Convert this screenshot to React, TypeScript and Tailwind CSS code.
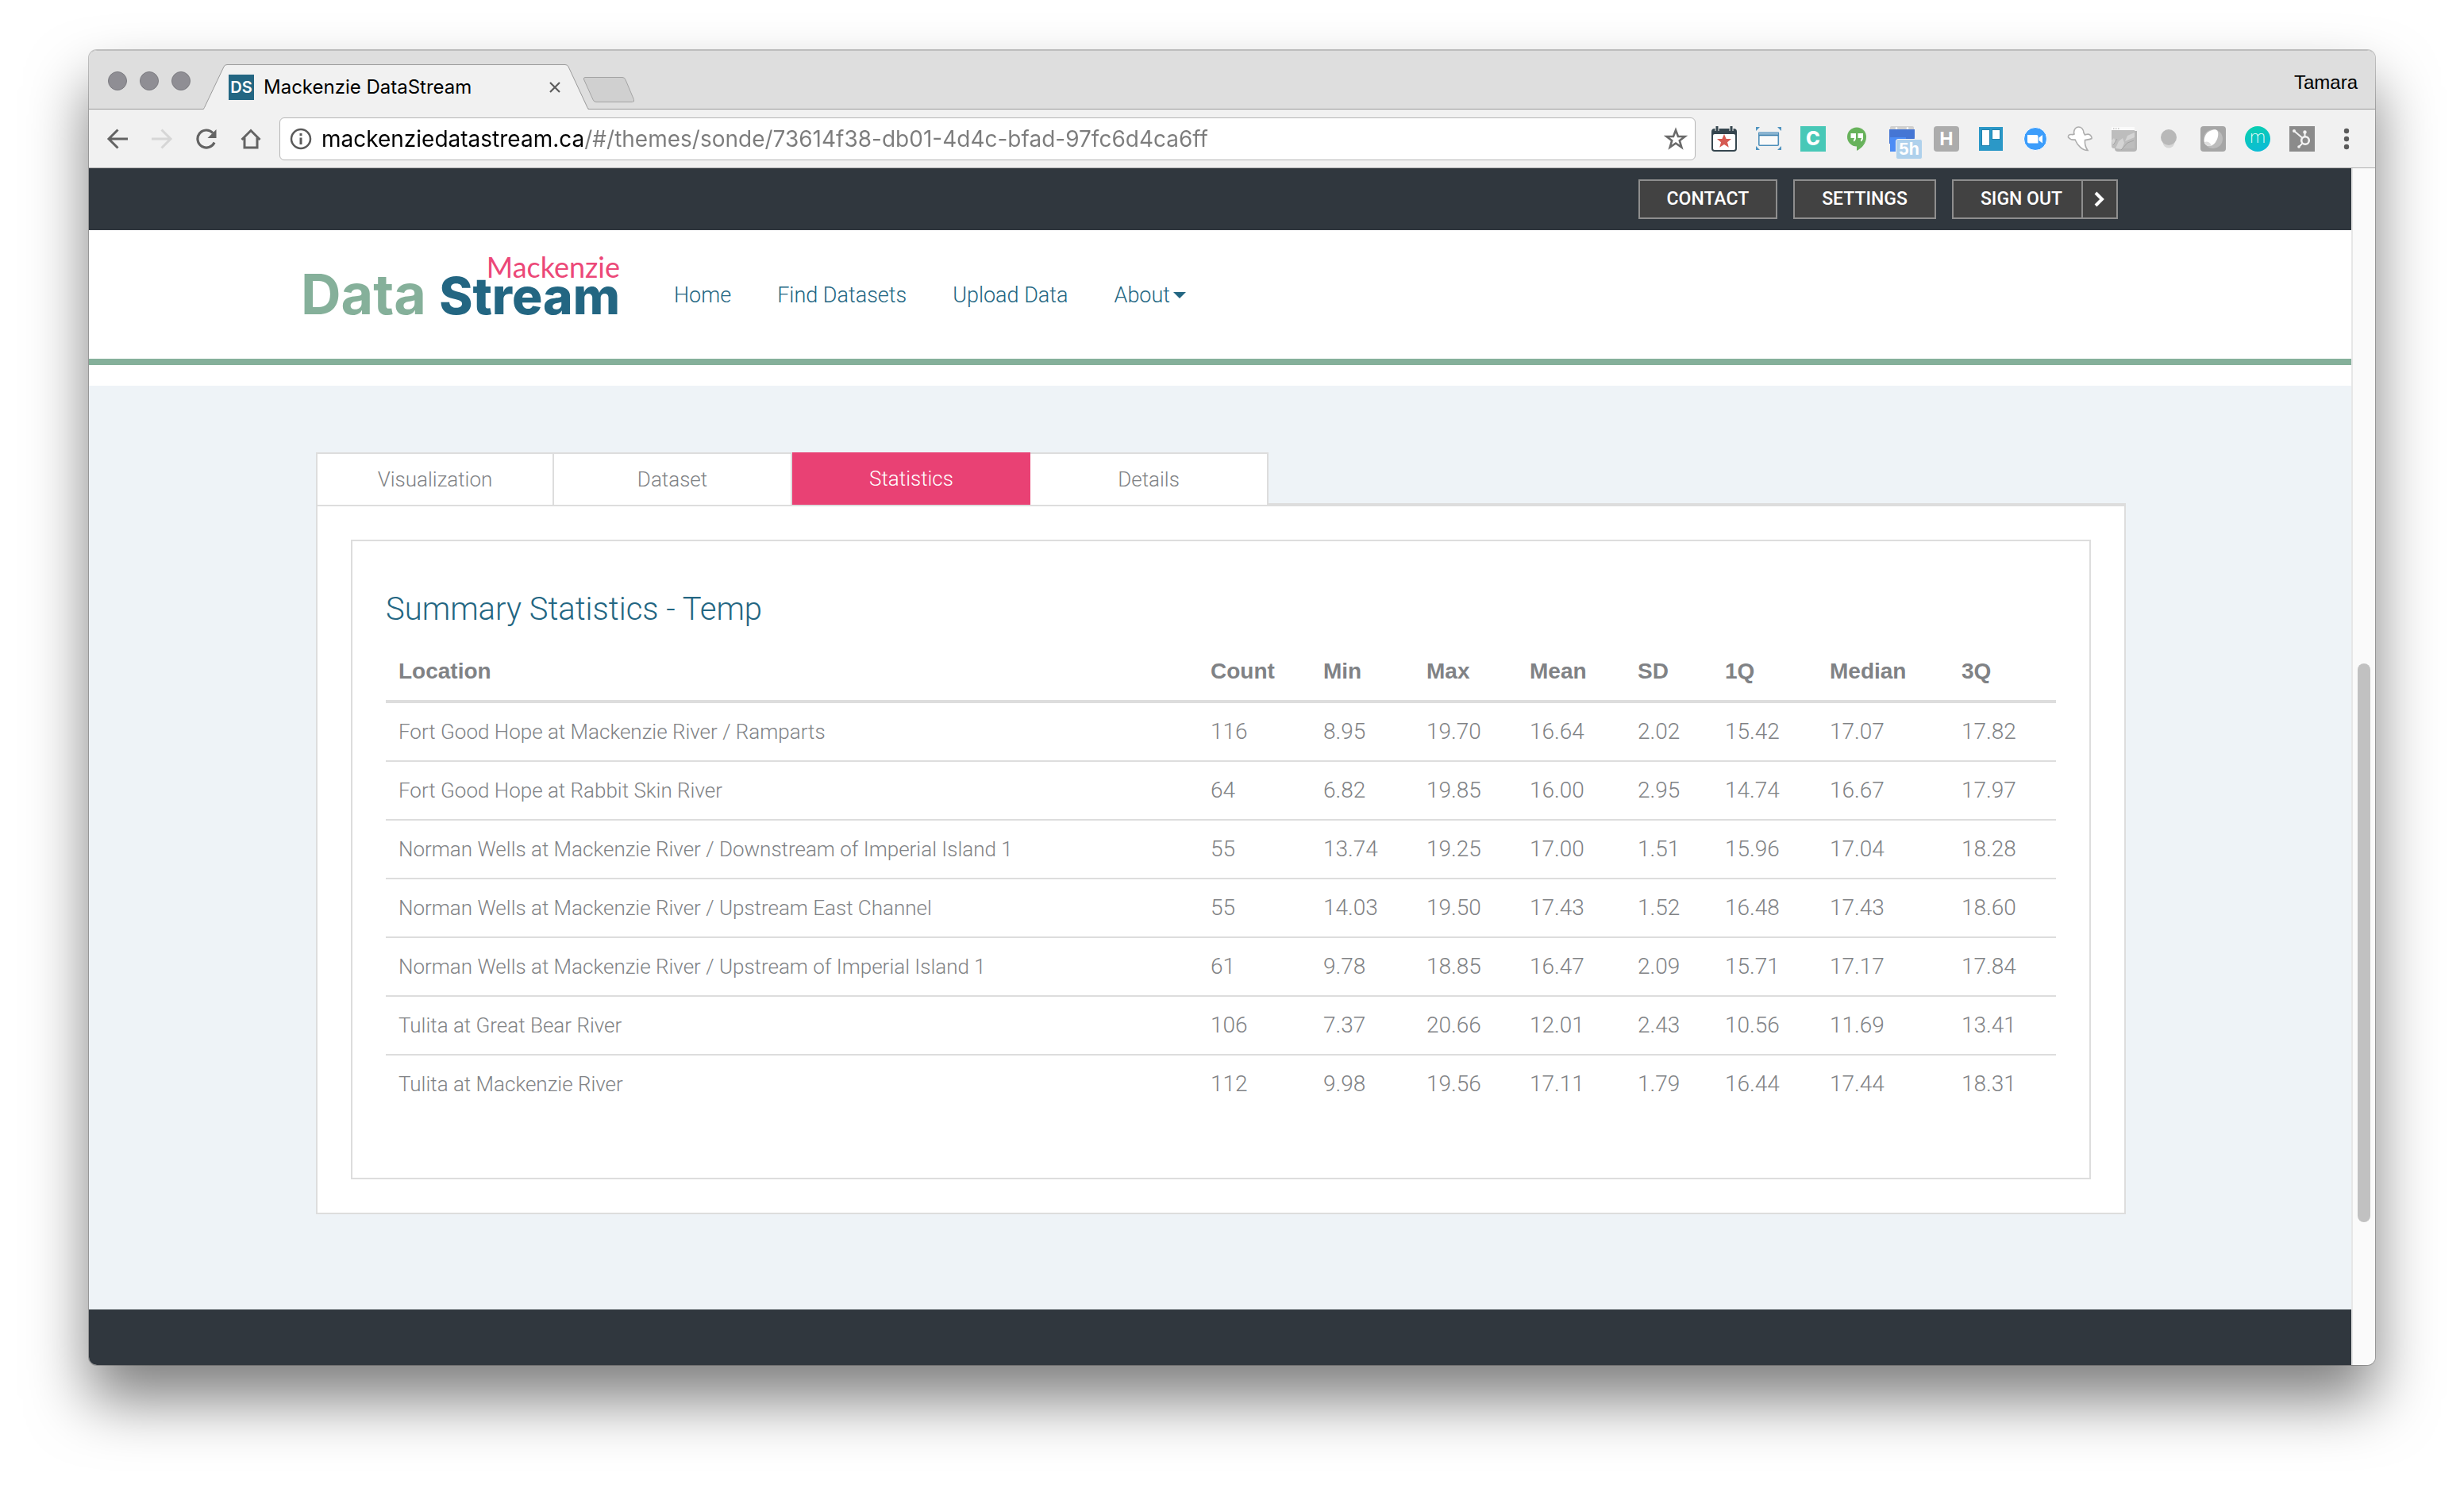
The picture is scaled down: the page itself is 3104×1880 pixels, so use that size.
import { useState, type ReactNode } from 'react';

const rows: [string, ...string[]][] = [
  ['Fort Good Hope at Mackenzie River / Ramparts', '116', '8.95', '19.70', '16.64', '2.02', '15.42', '17.07', '17.82'],
  ['Fort Good Hope at Rabbit Skin River', '64', '6.82', '19.85', '16.00', '2.95', '14.74', '16.67', '17.97'],
  ['Norman Wells at Mackenzie River / Downstream of Imperial Island 1', '55', '13.74', '19.25', '17.00', '1.51', '15.96', '17.04', '18.28'],
  ['Norman Wells at Mackenzie River / Upstream East Channel', '55', '14.03', '19.50', '17.43', '1.52', '16.48', '17.43', '18.60'],
  ['Norman Wells at Mackenzie River / Upstream of Imperial Island 1', '61', '9.78', '18.85', '16.47', '2.09', '15.71', '17.17', '17.84'],
  ['Tulita at Great Bear River', '106', '7.37', '20.66', '12.01', '2.43', '10.56', '11.69', '13.41'],
  ['Tulita at Mackenzie River', '112', '9.98', '19.56', '17.11', '1.79', '16.44', '17.44', '18.31'],
];

const columns: { name: string; width: string }[] = [
  { name: 'Location', width: '' },
  { name: 'Count', width: 'w-[142px]' },
  { name: 'Min', width: 'w-[130px]' },
  { name: 'Max', width: 'w-[130px]' },
  { name: 'Mean', width: 'w-[136px]' },
  { name: 'SD', width: 'w-[110px]' },
  { name: '1Q', width: 'w-[132px]' },
  { name: 'Median', width: 'w-[166px]' },
  { name: '3Q', width: 'w-[135px]' },
];

function ToolButton({ label, children }: { label: string; children: ReactNode }) {
  return (
    <button type="button" aria-label={label} className="relative block size-8 shrink-0">
      {children}
    </button>
  );
}

const icon = 'block size-8 overflow-visible';

function NavigationButtons() {
  return (
    <div className="flex shrink-0 gap-6 pl-5">
      <ToolButton label="Back">
        <svg viewBox="0 0 32 32" className={icon} fill="none" stroke="#636363" strokeWidth="3">
          <path d="M29 16H5M16.500 4.500 5 16l11.500 11.500" />
        </svg>
      </ToolButton>
      <ToolButton label="Forward">
        <svg viewBox="0 0 32 32" className={icon} fill="none" stroke="#d6d6d6" strokeWidth="3">
          <path d="M3 16h24M15.500 4.500 27 16 15.500 27.500" />
        </svg>
      </ToolButton>
      <ToolButton label="Reload">
        <svg viewBox="0 0 32 32" className={icon} fill="none" stroke="#636363" strokeWidth="3.200">
          <path d="M26 20.500A11 11 0 1 1 24 8.500" />
          <path d="M28.500 4v11H17.500z" fill="#636363" stroke="none" />
        </svg>
      </ToolButton>
      <ToolButton label="Home page">
        <svg viewBox="0 0 32 32" className={icon} fill="none" stroke="#636363" strokeWidth="3">
          <path d="M4.500 17 16 5.500 27.500 17M8 14.500V27h16V14.500" />
        </svg>
      </ToolButton>
    </div>
  );
}

function Extensions() {
  return (
    <div className="flex shrink-0 gap-6">
      <ToolButton label="Calendar favourites">
        <svg viewBox="0 0 32 32" className={icon}>
          <rect x="0" y="3" width="32" height="29" rx="4" fill="#36464f" />
          <rect x="2" y="10" width="28" height="20" rx="2" fill="#fff" />
          <path d="M7 0v6M25 0v6" stroke="#f1f1f1" strokeWidth="5" />
          <path d="M7 0v6M25 0v6" stroke="#36464f" strokeWidth="3" />
          <path d="m16 10 2.600 6h6.400l-5 4.200 1.800 6.600L16 23l-5.800 3.800 1.800-6.600-5-4.200h6.400z" fill="#d65a52" />
        </svg>
      </ToolButton>
      <ToolButton label="Window resizer">
        <svg viewBox="0 0 32 32" className={icon}>
          <path d="M0 1h5L0 6zM32 1h-5l5 5zM0 30h5l-5-5zM32 30h-5l5-5z" fill="#4e93bf" />
          <rect x="3.800" y="7.800" width="24.500" height="16.500" rx="1" fill="#fafafa" stroke="#4e8fba" strokeWidth="1.600" />
          <path d="M4 7h24v4H4z" fill="#8bb4d1" />
          <path d="M4 11.500h24" stroke="#3f80ad" strokeWidth="1.500" />
        </svg>
      </ToolButton>
      <ToolButton label="Clip">
        <span className="flex size-8 items-center justify-center bg-[#48c8b7] font-['Inter',sans-serif] text-[24px] leading-8 font-extrabold text-white">C</span>
      </ToolButton>
      <ToolButton label="Hangouts">
        <svg viewBox="0 0 32 32" className={icon}>
          <path d="M15 1a12 12 0 1 1 0 24v6C22 27.500 27 21 27 13.500A12 12 0 0 0 15 1" fill="#67b25b" />
          <circle cx="15" cy="13.500" r="12" fill="#67b25b" />
          <path d="M7.500 9h6.500v6c0 2-1.200 3.500-3 4.500v-2.500c.8-.6 1-1.300 1-2H7.500zM16.500 9H23v6c0 2-1.200 3.500-3 4.500v-2.500c.8-.6 1-1.300 1-2h-4.500z" fill="#fff" />
        </svg>
      </ToolButton>
      <ToolButton label="Calendar, next event in 5 hours">
        <svg viewBox="0 0 32 32" className={icon}>
          <rect x="1" y="0" width="30" height="6" rx="2" fill="#cfcfcf" />
          <circle cx="9" cy="2.500" r="1.300" fill="#fff" />
          <circle cx="23" cy="2.500" r="1.300" fill="#fff" />
          <path d="M0 4h32v10l-1 8H0z" fill="#4576d4" />
          <path d="M1 14h20v18H1z" fill="#4c8df5" />
        </svg>
        <span className="absolute top-4 left-2 box-content h-6 w-8 rounded-[3px] border border-[#f1f1f1] bg-[#afd1ec] text-center text-[22px] leading-6 font-bold text-white">5h</span>
      </ToolButton>
      <ToolButton label="H">
        <span className="flex size-8 items-center justify-center rounded-[4px] bg-[#acacac] text-[24px] leading-8 font-bold text-white">H</span>
      </ToolButton>
      <ToolButton label="Boards">
        <svg viewBox="0 0 32 32" className={icon}>
          <rect x="1" y="1" width="30" height="30" fill="#2b98c7" />
          <rect x="4.500" y="4.500" width="10" height="20" fill="#fff" stroke="#1f82ae" />
          <rect x="17.500" y="4.500" width="10" height="12" fill="#fff" stroke="#1f82ae" />
        </svg>
      </ToolButton>
      <ToolButton label="Video call">
        <svg viewBox="0 0 32 32" className={icon}>
          <circle cx="16" cy="16" r="14.500" fill="#3c9dfb" stroke="#fff" strokeWidth="1" />
          <path d="M6 11h11.500a2 2 0 0 1 2 2v8.500H8a2 2 0 0 1-2-2zM20.500 14.500l4.500-3.500v10.500l-4.500-3.500z" fill="#fff" />
        </svg>
      </ToolButton>
      <ToolButton label="Ghost">
        <svg viewBox="0 0 32 32" className={icon} fill="#fff" stroke="#adadad" strokeWidth="1.600">
          <path d="M8.500 8C9 3.500 11.500 1 14.500 1s6 2.500 6.500 7.500l1.500 2.500c2-.5 3.500-1.500 5.500-.5s3.500 3.500 3 5c-2 1.500-6.500 1.500-8.500 2-.5 5 1 9.500 3.500 13-7 0-13-6.500-16-13.500-3 .5-6.500-.5-8.500-3-.5-2 1-3.500 3-3.500 1.500 0 3 .5 4.500-.5z" />
        </svg>
      </ToolButton>
      <ToolButton label="Page capture">
        <svg viewBox="0 0 32 32" className={icon}>
          <path d="M4 6h28v22a4 4 0 0 1-4 4H8a4 4 0 0 1-4-4z" fill="#b5b5b5" />
          <path d="M0 5h29v23H3a3 3 0 0 1-3-3z" fill="#bdbdbd" />
          <path d="M0 1h29v4H0z" fill="#fafafa" />
          <path d="M2 3h8" stroke="#c4c4c4" strokeWidth="1.500" strokeDasharray="1.500 1.500" />
          <path d="m0 18 3-3 2 4-3 6zM5 28l4-9 5-4 2 6-3 8M20 12l9-4v6l-12 5z" fill="#d4d4d4" />
          <path d="m2 24 5-8M12 30l8-9 8-3" stroke="#a3a3a3" fill="none" />
        </svg>
      </ToolButton>
      <ToolButton label="Light bulb">
        <svg viewBox="0 0 32 32" className={icon}>
          <circle cx="16" cy="20" r="7.500" fill="#d6d6d6" />
          <circle cx="16" cy="14" r="10" fill="#b8b8b8" />
        </svg>
      </ToolButton>
      <ToolButton label="Egg">
        <svg viewBox="0 0 32 32" className={icon}>
          <rect width="32" height="32" rx="4" fill="#a6a6a6" />
          <circle cx="16" cy="16" r="12" fill="#bcbcbc" />
          <path d="M21 5.500c3 3 .5 13-4 17s-10 3-12-1.500C3.500 15 7 8 12 6s7-2.500 9-.5" fill="#fff" />
          <path d="M5 20c3-1 6-1 9 4.500-4 1.500-8-.5-9-4.500" fill="#dedede" />
        </svg>
      </ToolButton>
      <ToolButton label="Mint">
        <span className="flex size-8 items-center justify-center rounded-full bg-[linear-gradient(160deg,#09d1ac,#0cb8dc)] pb-1 font-['Roboto',sans-serif] text-[22px] leading-7 font-extralight text-white">m</span>
      </ToolButton>
      <ToolButton label="Sprocket">
        <svg viewBox="0 0 32 32" className={icon} fill="none" stroke="#f3f3f3">
          <rect width="32" height="32" fill="#8b8b8b" stroke="none" />
          <circle cx="20" cy="18" r="4.800" strokeWidth="2.600" />
          <path d="m6 6 10 8.500M19.500 8v5M16.500 21.500 12 26" strokeWidth="2" />
          <circle cx="6" cy="6" r="2" fill="#f3f3f3" stroke="none" />
          <circle cx="19.500" cy="7.500" r="2.200" fill="#f3f3f3" stroke="none" />
          <circle cx="12" cy="26" r="1.800" fill="#f3f3f3" stroke="none" />
        </svg>
      </ToolButton>
      <ToolButton label="Browser menu">
        <svg viewBox="0 0 32 32" className={icon} fill="#5a5a5a">
          <circle cx="16" cy="6" r="3.200" />
          <circle cx="16" cy="16" r="3.200" />
          <circle cx="16" cy="26" r="3.200" />
        </svg>
      </ToolButton>
    </div>
  );
}

function BrowserChrome() {
  return (
    <div>
      <div className="flex h-[74px] items-start border-b border-[#9b9b9b] bg-[#dedede]">
        <div className="flex gap-4 pt-[26px] pl-6">
          <span className="size-6 rounded-full border border-[#7c7c81] bg-[#8f8e94]" />
          <span className="size-6 rounded-full border border-[#7c7c81] bg-[#8f8e94]" />
          <span className="size-6 rounded-full border border-[#7c7c81] bg-[#8f8e94]" />
        </div>
        <div className="relative mt-[17px] ml-4 flex h-[57px] w-[486px] items-center pr-9 pl-8">
          <svg viewBox="0 0 486 57" className="absolute inset-0 size-full" fill="#f1f1f1">
            <path d="M0 57 1 55.500 26 3q1-2.500 4-2.500h426q3 0 4 2.500l24 52.500 1 1.500z" />
            <path d="M0 56.500q1-.5 1.500-2L26 3q1-2.500 4-2.500h426q3 0 4 2.500l24 51.500q1 2 2 2" fill="none" stroke="#9b9b9b" />
          </svg>
          <span className="relative flex size-8 items-center justify-center bg-[#236682] font-['Inter',sans-serif] text-[20px] font-semibold text-white">DS</span>
          <span className="relative grow pl-3 font-['Inter',sans-serif] text-[24px] leading-8 text-black">Mackenzie DataStream</span>
          <button type="button" aria-label="Close tab" className="relative">
            <svg viewBox="0 0 14 14" className="block size-[14px]" stroke="#5c5c5c" strokeWidth="2.200">
              <path d="m1 1 12 12M13 1 1 13" />
            </svg>
          </button>
        </div>
        <button type="button" aria-label="New tab" className="mt-8 -ml-2">
          <svg viewBox="0 0 66 34" className="block h-[34px] w-[66px]" fill="#d0d0d0" stroke="#a3a3a3">
            <path d="M3 1.500h47q3 0 4 3l10.500 25q1 3-2 3H17q-3 0-4-3L1.500 4q-.5-2.500 1.500-2.500z" />
          </svg>
        </button>
        <button type="button" className="mt-6 mr-[22px] ml-auto text-[24px] leading-8 text-black">Tamara</button>
      </div>
      <div className="flex h-[74px] items-center gap-5 border-b border-[#b0b0b0] bg-[#f1f1f1] pr-5">
        <NavigationButtons />
        <div className="flex h-[54px] min-w-0 grow items-center rounded-md border border-[#b6b6b6] bg-white pr-2 pl-3">
          <svg viewBox="0 0 28 28" className="block size-7 shrink-0" fill="none" stroke="#5a5a5a" strokeWidth="2.500">
            <circle cx="14" cy="14" r="12" />
            <path d="M14 12.500V21M14 7v3" strokeWidth="3" />
          </svg>
          <input
            type="text"
            aria-label="Address"
            defaultValue="mackenziedatastream.ca/#/themes/sonde/73614f38-db01-4d4c-bfad-97fc6d4ca6ff"
            className="ml-3 min-w-0 grow bg-[linear-gradient(to_right,#000_330px,#7c7c7c_330px)] bg-clip-text font-['Inter',sans-serif] text-[28px] leading-10 text-transparent outline-none"
          />
          <button type="button" aria-label="Bookmark this page">
            <svg viewBox="0 0 32 32" className="block size-8" fill="none" stroke="#6a6a6a" strokeWidth="2.600">
              <path d="m16 5 3 8h8.500l-6.700 5.200 2.500 8.300L16 21.500l-7.300 5 2.500-8.300L4.500 13H13z" />
            </svg>
          </button>
        </div>
        <Extensions />
      </div>
    </div>
  );
}

const barButton = "h-[50px] border-2 border-[#8e8e8e] bg-[#424242] font-['Roboto',sans-serif] text-[23px] leading-6 font-medium text-white";

function TopBar() {
  return (
    <div className="bg-[#30373e]">
      <div className="mx-auto flex h-[78px] max-w-[2340px] items-center justify-end gap-5 pr-[39px]">
        <button type="button" className={`${barButton} px-[34px]`}>CONTACT</button>
        <button type="button" className={`${barButton} px-[34px]`}>SETTINGS</button>
        <button type="button" className={`${barButton} flex items-stretch`}>
          <span className="flex items-center pr-6 pl-[34px]">SIGN OUT</span>
          <span className="flex w-11 items-center justify-center border-l-2 border-[#8e8e8e]">
            <svg viewBox="0 0 14 20" className="block h-5 w-[14px]" fill="none" stroke="#fff" strokeWidth="4">
              <path d="m2 2 8 8-8 8" />
            </svg>
          </span>
        </button>
      </div>
    </div>
  );
}

function Header() {
  return (
    <header className="border-b-8 border-[#85b09a] bg-white">
      <div className="mx-auto flex h-[162px] max-w-[2340px] items-center pl-3">
        <a href="#home" className="mt-9 block w-[402px] shrink-0 self-start">
          <span className="block text-right font-['Lato',sans-serif] text-[36px] leading-5 font-normal text-[#ec4878]">Mackenzie</span>
          <span className="flex items-baseline justify-between font-['Inter',sans-serif] leading-[50px]">
            <span className="text-[70px] font-bold text-[#85b09a]">Data</span>
            <span className="text-[64px] font-extrabold text-[#236682]">Stream</span>
          </span>
        </a>
        <nav className="ml-[68px] flex items-center gap-[58px] pt-[2px] font-['Roboto',sans-serif] text-[27px] leading-10 font-light text-[#236682]">
          <a href="#home">Home</a>
          <a href="#find">Find Datasets</a>
          <a href="#upload">Upload Data</a>
          <button type="button" aria-haspopup="menu" className="flex items-center gap-1">
            About
            <svg viewBox="0 0 16 8" className="block h-2 w-4" fill="#236682">
              <path d="M0 0h16L8 8z" />
            </svg>
          </button>
        </nav>
      </div>
    </header>
  );
}

function Statistics() {
  return (
    <section className="border-2 border-[#ddd] px-[42px] pt-[62px] pb-[82px]">
      <h1 className="mb-[18px] font-['Roboto',sans-serif] text-[40px] leading-[48px] font-light text-[#236682]">Summary Statistics - Temp</h1>
      <table className="w-full table-fixed border-collapse text-left text-[28px] leading-10 text-[#808285]">
        <colgroup>
          {columns.map((c) => (
            <col key={c.name} className={c.width} />
          ))}
        </colgroup>
        <thead>
          <tr className="border-b-4 border-[#ddd]">
            {columns.map((c) => (
              <th key={c.name} scope="col" className="px-4 py-4 font-bold">{c.name}</th>
            ))}
          </tr>
        </thead>
        <tbody className="font-['Roboto',sans-serif] font-light">
          {rows.map(([place, ...values]) => (
            <tr key={place} className="border-b-2 border-[#ddd] last:border-b-0">
              <td className="truncate px-4 py-4 text-[26px]">{place}</td>
              {values.map((v, i) => (
                <td key={i} className="px-4 py-4">{v}</td>
              ))}
            </tr>
          ))}
        </tbody>
      </table>
    </section>
  );
}

const tabNames = ['Visualization', 'Dataset', 'Statistics', 'Details'];

function Panel() {
  const [active, setActive] = useState('Statistics');
  return (
    <div className="mx-auto max-w-[2280px]">
      <div role="tablist" className="flex border-b-2 border-[#ddd] font-['Roboto',sans-serif] text-[26px] leading-10 font-light">
        {tabNames.map((name) => (
          <button
            key={name}
            type="button"
            role="tab"
            aria-selected={name === active}
            onClick={() => setActive(name)}
            className={
              name === active
                ? '-mb-[2px] h-[66px] w-[300px] bg-[#e94174] text-white'
                : '-mb-[2px] h-[66px] w-[300px] border-t-2 border-r-2 border-[#ddd] bg-white text-[#808285] first:border-l-2'
            }
          >
            {name}
          </button>
        ))}
      </div>
      <div role="tabpanel" className="border-2 border-[#ddd] bg-white p-[42px]">
        <Statistics />
      </div>
    </div>
  );
}

export default function App() {
  return (
    <div className="min-h-screen bg-white px-28 pt-[63px] pb-40 font-['Liberation_Sans',Arial,sans-serif]">
      <div className="overflow-hidden rounded-[10px] border-t border-[#bdbdbd] shadow-[0_0_0_1px_rgba(0,0,0,0.22),0_44px_76px_rgba(0,0,0,0.5)]">
        <BrowserChrome />
        <div className="flex">
          <div className="min-w-0 grow">
            <TopBar />
            <Header />
            <main className="border-t-26 border-white bg-[#eef3f7] pt-21 pr-6 pb-30 pl-[26px]">
              <Panel />
            </main>
            <footer className="h-[70px] bg-[#30373e]" />
          </div>
          <div className="flex w-[30px] shrink-0 flex-col border-l-2 border-[#e7e7e7] bg-[#fafafa] pl-[6px]">
            <span className="flex-[624]" />
            <span className="w-4 flex-[704] rounded-full bg-[#c1c1c1]" />
            <span className="flex-[180]" />
          </div>
        </div>
      </div>
    </div>
  );
}
